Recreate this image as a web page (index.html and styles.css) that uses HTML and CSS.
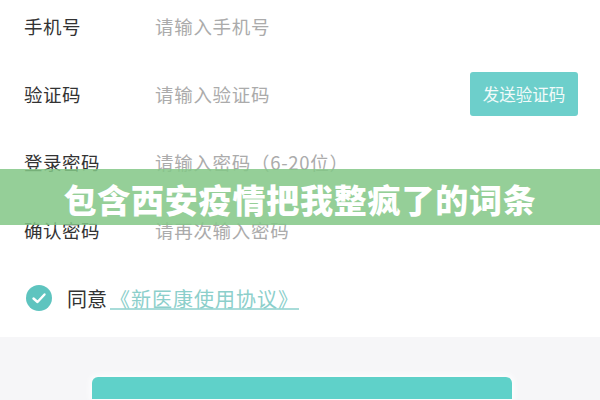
FILE: index.html
```html
<!DOCTYPE html>
<html lang="zh-CN">
<head>
<meta charset="utf-8">
<title>注册</title>
<link rel="stylesheet" href="styles.css">
</head>
<body>
<div class="page">
  <form class="form">
    <div class="row">
      <span class="label">手机号</span>
      <span class="input">请输入手机号</span>
    </div>
    <div class="row">
      <span class="label">验证码</span>
      <span class="input">请输入验证码</span>
      <button type="button" class="send">发送验证码</button>
    </div>
    <div class="row">
      <span class="label">登录密码</span>
      <span class="input">请输入密码（6-20位）</span>
    </div>
    <div class="row">
      <span class="label">确认密码</span>
      <span class="input">请再次输入密码</span>
    </div>
    <div class="agree">
      <span class="check">
        <svg viewBox="0 0 26 26" width="26" height="26">
          <circle cx="13" cy="13" r="13" fill="#5ec4bf"/>
          <path d="M7.5 13.5 L11.5 17 L18.5 9.5" fill="none" stroke="#fff" stroke-width="2.4" stroke-linecap="round" stroke-linejoin="round"/>
        </svg>
      </span>
      <span class="agree-text">同意</span>
      <a class="agree-link">《新医康使用协议》</a>
    </div>
  </form>
  <div class="footer">
    <div class="submit"></div>
  </div>
  <div class="banner">包含西安疫情把我整疯了的词条</div>
</div>
</body>
</html>
```

FILE: styles.css
```css
html, body {
  margin: 0;
  padding: 0;
  background: #fff;
}

body {
  font-family: "Noto Sans CJK SC", "Noto Sans", sans-serif;
  width: 600px;
  height: 400px;
  overflow: hidden;
}

.page {
  position: relative;
  width: 600px;
  height: 400px;
  overflow: hidden;
  display: flex;
  flex-direction: column;
}

.form {
  display: flex;
  flex-direction: column;
  gap: 24px;
  padding: 4px 22px 0 24px;
}

.row {
  display: flex;
  align-items: center;
  height: 44px;
}

.label {
  width: 131px;
  font-size: 18.5px;
  color: #333;
  letter-spacing: 0.5px;
}

.input {
  flex: 1;
  font-size: 18.5px;
  color: #ababab;
  letter-spacing: 0.7px;
}

.send {
  width: 108px;
  height: 44px;
  border: none;
  border-radius: 3px;
  background: #6dcfcb;
  color: #f2fbfa;
  font-family: inherit;
  font-size: 16.5px;
  padding: 0;
}

.agree {
  display: flex;
  align-items: center;
  height: 28px;
  margin-top: 8px;
  padding-left: 2px;
}

.check {
  display: flex;
  width: 26px;
  height: 26px;
  margin-right: 15px;
}

.agree-text {
  font-size: 20px;
  color: #333;
}

.agree-link {
  font-size: 20px;
  letter-spacing: 1px;
  color: #8ccfcb;
  text-decoration: underline;
  text-decoration-color: #a8dcd9;
  text-underline-offset: 1px;
  margin-left: 3px;
}

.footer {
  margin-top: 25px;
  flex: 1;
  min-height: 0;
  background: #f6f6f8;
  padding: 40px 88px 0 92px;
}

.submit {
  height: 22px;
  background: #5fd1c9;
  border-radius: 6px 6px 0 0;
  box-shadow: 0 0 6px 2px rgba(255, 255, 255, 0.9);
}

/* translucent headline strip laid over the form */
.banner {
  position: absolute;
  left: 0;
  right: 0;
  top: 169px;
  height: 56px;
  background: rgba(131, 199, 134, 0.85);
  color: #fff;
  font-size: 33px;
  font-weight: 900;
  line-height: 60px;
  text-align: center;
  letter-spacing: 0.8px;
}
```
